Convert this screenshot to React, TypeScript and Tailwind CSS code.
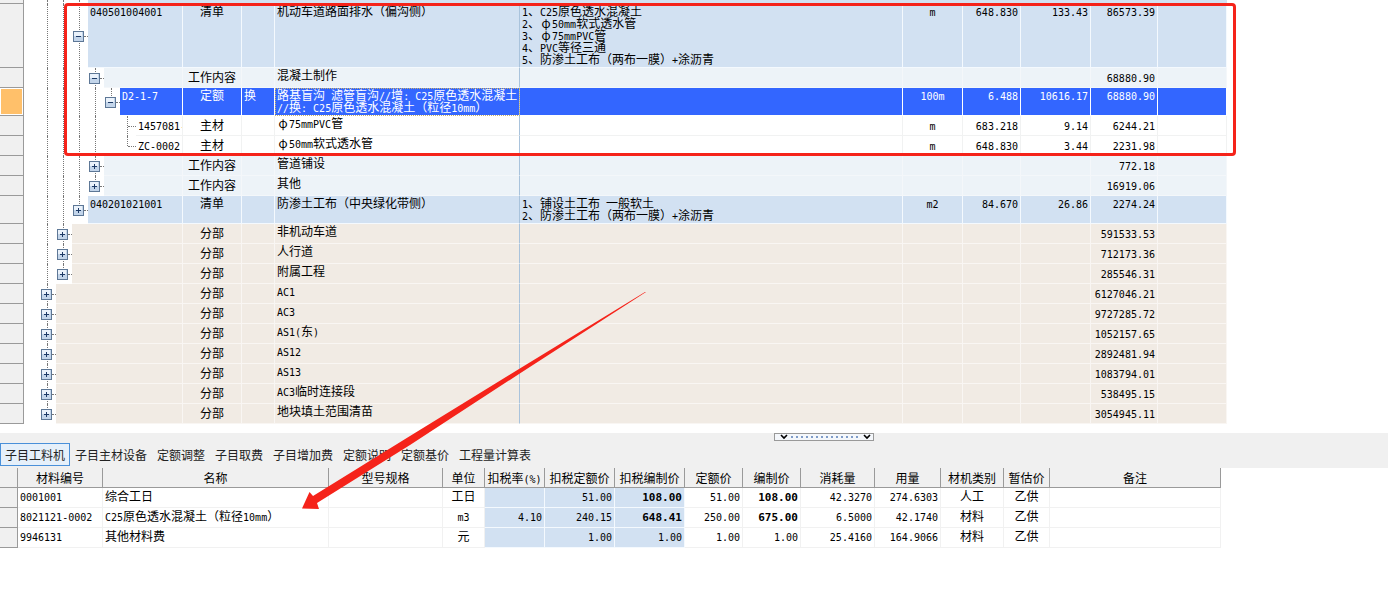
import React from "react";

type Tone = "list" | "work" | "selected" | "plain" | "section";

interface Row {
  code?: string;
  level: number;
  open?: boolean;
  leaf?: boolean;
  last?: boolean;
  lines: number[];
  kind: string;
  mark?: string;
  name: string[];
  desc?: string[];
  unit?: string;
  qty?: string;
  price?: string;
  total: string;
  tone: Tone;
  height: string;
}

const section = (level: number, name: string, total: string, last = false): Row => ({
  level,
  lines: level === 2 ? [1] : [],
  last,
  kind: "分部",
  name: [name],
  total,
  tone: "section",
  height: "h-5",
});

const rows: Row[] = [
  {
    code: "040501004001", level: 3, open: true, lines: [1, 2], kind: "清单",
    name: ["机动车道路面排水（偏沟侧）"],
    desc: ["1、C25原色透水混凝土", "2、φ50mm软式透水管", "3、φ75mmPVC管", "4、PVC等径三通", "5、防渗土工布（两布一膜）+涂沥青"],
    unit: "m", qty: "648.830", price: "133.43", total: "86573.39", tone: "list", height: "h-16",
  },
  { level: 4, open: true, lines: [1, 2, 3], kind: "工作内容", name: ["混凝土制作"], total: "68880.90", tone: "work", height: "h-5" },
  {
    code: "D2-1-7", level: 5, open: true, last: true, lines: [1, 2, 3, 4], kind: "定额", mark: "换",
    name: ["路基盲沟 滤管盲沟//增: C25原色透水混凝土", "//换: C25原色透水混凝土（粒径10mm）"],
    unit: "100m", qty: "6.488", price: "10616.17", total: "68880.90", tone: "selected", height: "h-7",
  },
  { code: "1457081-", level: 6, leaf: true, lines: [1, 2, 3, 4], kind: "主材", name: ["φ75mmPVC管"], unit: "m", qty: "683.218", price: "9.14", total: "6244.21", tone: "plain", height: "h-5" },
  { code: "ZC-0002", level: 6, leaf: true, last: true, lines: [1, 2, 3, 4], kind: "主材", name: ["φ50mm软式透水管"], unit: "m", qty: "648.830", price: "3.44", total: "2231.98", tone: "plain", height: "h-5" },
  { level: 4, lines: [1, 2, 3], kind: "工作内容", name: ["管道铺设"], total: "772.18", tone: "work", height: "h-5" },
  { level: 4, last: true, lines: [1, 2, 3], kind: "工作内容", name: ["其他"], total: "16919.06", tone: "work", height: "h-5" },
  {
    code: "040201021001", level: 3, last: true, lines: [1, 2], kind: "清单", name: ["防渗土工布（中央绿化带侧）"],
    desc: ["1、铺设土工布 一般软土", "2、防渗土工布（两布一膜）+涂沥青"],
    unit: "m2", qty: "84.670", price: "26.86", total: "2274.24", tone: "list", height: "h-7",
  },
  section(2, "非机动车道", "591533.53"),
  section(2, "人行道", "712173.36"),
  section(2, "附属工程", "285546.31", true),
  section(1, "AC1", "6127046.21"),
  section(1, "AC3", "9727285.72"),
  section(1, "AS1(东)", "1052157.65"),
  section(1, "AS12", "2892481.94"),
  section(1, "AS13", "1083794.01"),
  section(1, "AC3临时连接段", "538495.15"),
  section(1, "地块填土范围清苗", "3054945.11", true),
];

const tones: Record<Tone, string> = {
  list: "bg-[#d2e1f2] border-[#f4f9fe]",
  work: "bg-[#edf3f8] border-[#f4f7fa]",
  selected: "bg-[#3366ff] border-white text-white",
  plain: "bg-white border-[#f1f2f2]",
  section: "bg-[#f1ebe4] border-[#f9f6f3]",
};

/** Sets Latin runs in a half-width face so that two of them fill one ideograph. */
function T({ children }: { children: string }) {
  const parts = children.split(/(φ|[\x20-\x7e]+)/).filter(Boolean);
  return (
    <>
      {parts.map((p, i) =>
        p === "φ" ? (
          <span key={i} className="inline-block w-3 text-center leading-2">φ</span>
        ) : /^[\x20-\x7e]/.test(p) ? (
          <span key={i} className="font-['DejaVu_Sans_Mono',monospace] text-[10px] leading-2 whitespace-pre">{p}</span>
        ) : (
          <span key={i}>{p}</span>
        )
      )}
    </>
  );
}

function Toggle({ open }: { open?: boolean }) {
  return (
    <button type="button" aria-label={open ? "折叠" : "展开"} aria-expanded={!!open} className="relative block size-[11px] shrink-0">
      <svg viewBox="0 0 11 11" className="block size-[11px]" shapeRendering="crispEdges">
        <rect x="0" y="0" width="11" height="11" fill="#5d7796" />
        <rect x="1" y="1" width="9" height="9" fill="#c3d5ea" />
        <rect x="1" y="1" width="8" height="4" fill="#eaf2fb" />
        <rect x="3" y="5" width="5" height="1" fill="#1d3a66" />
        {!open && <rect x="5" y="3" width="1" height="5" fill="#1d3a66" />}
      </svg>
    </button>
  );
}

function VLine({ half }: { half?: boolean }) {
  return <span className={`absolute top-0 left-[7px] border-l border-dotted border-[#777] ${half ? "h-1/2" : "h-full"}`} />;
}

function TreeCell({ row }: { row: Row }) {
  const slots = Array.from({ length: row.level }, (_, i) => i + 1);
  const tall = row.height !== "h-5";
  return (
    <div className={`flex bg-white ${row.height}`}>
      <span className="w-4 shrink-0" />
      {slots.map((n) => (
        <span key={n} className="relative flex w-4 shrink-0 items-center pl-px">
          {n < row.level && row.lines.includes(n) && <VLine />}
          {n === row.level && (
            <>
              <VLine half={row.last} />
              {row.leaf ? <span className="w-[7px]" /> : <Toggle open={row.open} />}
              <span className="flex-1 border-t border-dotted border-[#777]" />
            </>
          )}
        </span>
      ))}
      <span className={`min-w-0 flex-1 overflow-hidden border-r border-b pl-0.5 whitespace-nowrap ${tall ? "pt-px" : "pt-[3px]"} ${tones[row.tone]}`}>
        {row.code && <T>{row.code}</T>}
      </span>
    </div>
  );
}

function Cell({ row, align, top, children, extra = "" }: { row: Row; align?: string; top?: boolean; children?: React.ReactNode; extra?: string }) {
  const tall = row.height !== "h-5";
  return (
    <td className={`border-r border-b p-0 align-top whitespace-nowrap ${tones[row.tone]} ${top || tall ? "pt-px" : "pt-[3px]"} ${align ?? ""} ${extra}`}>
      {children}
    </td>
  );
}

function CostTable() {
  return (
    <table className="w-full table-fixed border-separate border-spacing-0">
      <colgroup>
        <col className="w-6" />
        <col className="w-[159px]" />
        <col className="w-[59px]" />
        <col className="w-[33px]" />
        <col className="w-[245px]" />
        <col />
        <col className="w-[60px]" />
        <col className="w-[58px]" />
        <col className="w-[70px]" />
        <col className="w-[67px]" />
        <col className="w-[69px]" />
      </colgroup>
      <tbody>
        <tr className="h-1">
          <td className="border-r border-b border-[#9a9a9a] bg-[#f0f0f0] p-0" />
          <td className="p-0">
            <div className="flex h-1">
              <span className="w-4" />
              {[1, 2, 3].map((n) => (
                <span key={n} className="relative w-4"><VLine /></span>
              ))}
              <span className="flex-1 bg-[#d2e1f2]" />
            </div>
          </td>
          <td colSpan={9} className="bg-[#d2e1f2] p-0" />
        </tr>
        {rows.map((row, i) => (
          <tr key={i} className={row.height}>
            <td className={`border-r border-b border-[#9a9a9a] p-px ${row.tone === "selected" ? "bg-white" : "bg-[#f0f0f0]"}`}>
              {row.tone === "selected" && <div className="h-[25px] bg-[#ffc06a]" />}
            </td>
            <td className="p-0 align-top"><TreeCell row={row} /></td>
            <Cell row={row} align="text-center">{row.kind}</Cell>
            <Cell row={row} align="pl-0.5">{row.mark}</Cell>
            <Cell row={row} top align="pl-0.5" extra={row.tone === "selected" ? "border-r-[#a9c3dc] outline-1 -outline-offset-1 outline-dotted outline-[#c8b070]" : "border-r-[#a9c3dc]"}>
              {row.name.map((n) => <div key={n}><T>{n}</T></div>)}
            </Cell>
            <Cell row={row} top align="pl-0.5">
              {row.desc?.map((d) => <div key={d}><T>{d}</T></div>)}
            </Cell>
            <Cell row={row} align="text-center">{row.unit && <T>{row.unit}</T>}</Cell>
            <Cell row={row} align="pr-0.5 text-right">{row.qty && <T>{row.qty}</T>}</Cell>
            <Cell row={row} align="pr-0.5 text-right">{row.price && <T>{row.price}</T>}</Cell>
            <Cell row={row} align="pr-0.5 text-right"><T>{row.total}</T></Cell>
            <Cell row={row} />
          </tr>
        ))}
      </tbody>
    </table>
  );
}

const tabs = ["子目工料机", "子目主材设备", "定额调整", "子目取费", "子目增加费", "定额说明", "定额基价", "工程量计算表"];

const heads = ["材料编号", "名称", "型号规格", "单位", "扣税率(%)", "扣税定额价", "扣税编制价", "定额价", "编制价", "消耗量", "用量", "材机类别", "暂估价", "备注"];

const materials = [
  ["0001001", "综合工日", "", "工日", "", "51.00", "*108.00", "51.00", "*108.00", "42.3270", "274.6303", "人工", "乙供", ""],
  ["8021121-0002", "C25原色透水混凝土（粒径10mm）", "", "m3", "4.10", "240.15", "*648.41", "250.00", "*675.00", "6.5000", "42.1740", "材料", "乙供", ""],
  ["9946131", "其他材料费", "", "元", "", "1.00", "1.00", "1.00", "1.00", "25.4160", "164.9066", "材料", "乙供", ""],
];

function alignOf(c: number) {
  if (c < 3) return "pl-0.5";
  if (c === 3 || c > 10) return "text-center";
  return "pr-0.5 text-right";
}

function MaterialTable() {
  return (
    <table className="w-full table-fixed border-separate border-spacing-0">
      <colgroup>
        <col className="w-[18px]" />
        <col className="w-[85px]" />
        <col className="w-[226px]" />
        <col className="w-[114px]" />
        <col className="w-[42px]" />
        <col className="w-[60px]" />
        <col className="w-[70px]" />
        <col className="w-[70px]" />
        <col className="w-[58px]" />
        <col className="w-[58px]" />
        <col className="w-[74px]" />
        <col className="w-[66px]" />
        <col className="w-[63px]" />
        <col className="w-[46px]" />
        <col />
      </colgroup>
      <thead>
        <tr className="h-5">
          <td className="border-r border-b border-[#9a9a9a] bg-[#f0f0f0] p-0" />
          {heads.map((h) => (
            <th key={h} scope="col" className="border-r border-b border-[#9a9a9a] bg-[#f0f0f0] p-0 font-normal whitespace-nowrap">
              <T>{h}</T>
            </th>
          ))}
        </tr>
      </thead>
      <tbody>
        {materials.map((m) => (
          <tr key={m[0]} className="h-5">
            <td className="border-r border-b border-[#9a9a9a] bg-[#f0f0f0] p-0" />
            {m.map((v, c) => (
              <td
                key={c}
                className={`border-r border-b p-0 pt-0.5 align-top whitespace-nowrap ${alignOf(c)} ${c > 3 && c < 7 ? "border-[#f4f9fe] bg-[#d2e1f2]" : "border-[#f1f1f1]"}`}
              >
                {v.startsWith("*") ? (
                  <strong className="font-['DejaVu_Sans_Mono',monospace] text-[11px] leading-2 font-bold">{v.slice(1)}</strong>
                ) : (
                  <T>{v}</T>
                )}
              </td>
            ))}
          </tr>
        ))}
      </tbody>
    </table>
  );
}

function SplitterHandle() {
  return (
    <button type="button" aria-label="调整面板" className="block h-2 w-[100px] border border-[#999] bg-[#f4f7fb]">
      <svg viewBox="0 0 98 6" className="block h-1.5 w-full" fill="none">
        <path d="M6 1l3 3 3-3M89 1l3 3 3-3" stroke="#000" strokeWidth="1.6" />
        <path d="M16 3h70" stroke="#7f9cc8" strokeWidth="2" strokeDasharray="2 3" />
      </svg>
    </button>
  );
}

export default function App() {
  return (
    <main className="relative min-h-screen overflow-hidden bg-white font-['Noto_Sans_CJK_SC',sans-serif] text-xs leading-3 text-black">
      <section className="relative pr-[161px] pb-[9px]">
        <CostTable />
        <div className="pointer-events-none absolute top-[3px] right-[152px] left-16 h-[153px] rounded-sm border-3 border-[#f5231a]" />
      </section>
      <section>
        <div className="bg-[#f0f0f0]">
          <div className="flex justify-center pl-[260px]">
            <SplitterHandle />
          </div>
          <nav role="tablist" className="flex pt-0.5 pb-0.5">
            {tabs.map((t, i) => (
              <button
                key={t}
                type="button"
                role="tab"
                aria-selected={i === 0}
                className={`h-[23px] border px-1 whitespace-nowrap text-[#222] ${i === 0 ? "border-[#4a90d9] bg-[#e6f0fa]" : "border-transparent"}`}
              >
                {t}
              </button>
            ))}
          </nav>
        </div>
        <div className="pr-[167px]">
          <MaterialTable />
        </div>
      </section>
      <svg className="pointer-events-none absolute top-[285px] left-[295px] h-[230px] w-[360px]" viewBox="295 285 360 230">
        <path d="M646 292L519 374L410 445L317 503L319 509L302 508.5L309.5 492L313 496L410 436L519 369L645 292Z" fill="#f5231a" />
      </svg>
    </main>
  );
}
